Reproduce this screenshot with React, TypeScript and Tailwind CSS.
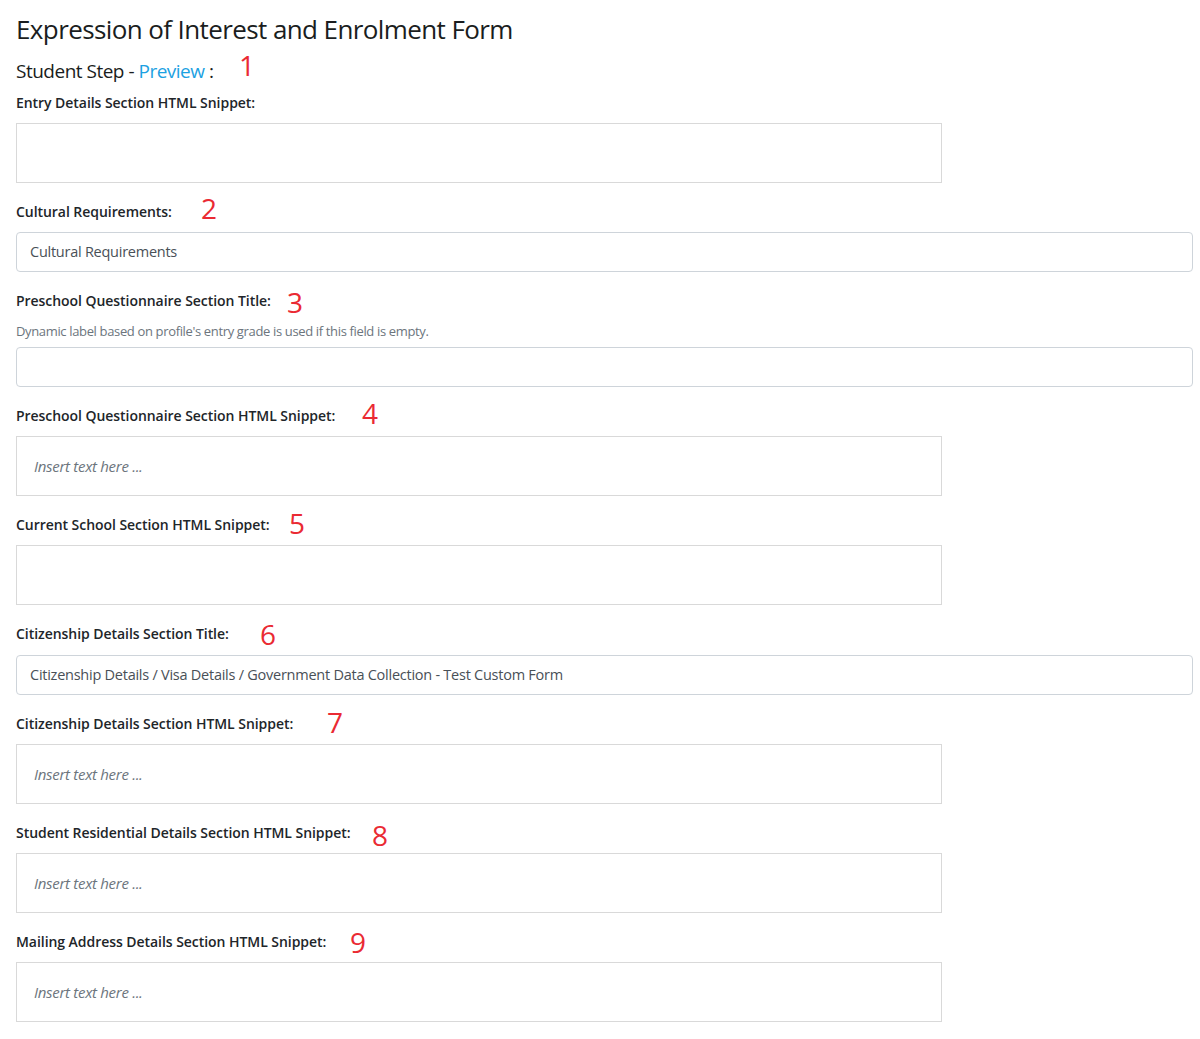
const font = { fontFamily: '"Open Sans", "Noto Sans", sans-serif' };

type Mark = { n: string; pos: string };

type Field = {
  label: string;
  mark?: Mark;
  kind: "html" | "input";
  value?: string;
  placeholder?: string;
  help?: string;
  labelGap?: string;
};

const fields: Field[] = [
  { label: "Entry Details Section HTML Snippet:", kind: "html" },
  {
    label: "Cultural Requirements:",
    mark: { n: "2", pos: "left-[185px] top-[-10px]" },
    kind: "input",
    value: "Cultural Requirements",
  },
  {
    label: "Preschool Questionnaire Section Title:",
    mark: { n: "3", pos: "left-[271px] top-[-5px]" },
    kind: "input",
    help: "Dynamic label based on profile's entry grade is used if this field is empty.",
  },
  {
    label: "Preschool Questionnaire Section HTML Snippet:",
    mark: { n: "4", pos: "left-[346px] top-[-9px]" },
    kind: "html",
    placeholder: "Insert text here ...",
  },
  {
    label: "Current School Section HTML Snippet:",
    mark: { n: "5", pos: "left-[273px] top-[-8px]" },
    kind: "html",
  },
  {
    label: "Citizenship Details Section Title:",
    mark: { n: "6", pos: "left-[244px] top-[-6px]" },
    kind: "input",
    value: "Citizenship Details / Visa Details / Government Data Collection - Test Custom Form",
    labelGap: "mb-[11px]",
  },
  {
    label: "Citizenship Details Section HTML Snippet:",
    mark: { n: "7", pos: "left-[311px] top-[-8px]" },
    kind: "html",
    placeholder: "Insert text here ...",
  },
  {
    label: "Student Residential Details Section HTML Snippet:",
    mark: { n: "8", pos: "left-[356px] top-[-4px]" },
    kind: "html",
    placeholder: "Insert text here ...",
  },
  {
    label: "Mailing Address Details Section HTML Snippet:",
    mark: { n: "9", pos: "left-[334px] top-[-6px]" },
    kind: "html",
    placeholder: "Insert text here ...",
  },
];

// red step numbers drawn over the form
function StepMark({ n, pos }: Mark) {
  return (
    <span className={`absolute ${pos} text-[28px] leading-[32px] text-[#ea2a33]`}>{n}</span>
  );
}

function FormField({ f }: { f: Field }) {
  return (
    <div className="mb-[19px]">
      <div className={`relative h-5 ${f.labelGap ?? "mb-[10px]"}`}>
        <label className="block text-[14px] leading-5 font-semibold text-[#212529] tracking-[-0.05px]">
          {f.label}
        </label>
        {f.mark && <StepMark {...f.mark} />}
      </div>
      {f.help && (
        <p className="mb-[6px] text-[13px] leading-5 text-[#6c757d] tracking-[-0.35px]">
          {f.help}
        </p>
      )}
      {f.kind === "html" ? (
        <div className="w-[926px] h-[60px] border border-[#d9d9d9] flex items-center pl-[17px]">
          {f.placeholder && (
            <span className="italic text-[15px] text-[#6c757d] tracking-[-0.3px]">
              {f.placeholder}
            </span>
          )}
        </div>
      ) : (
        <div className="w-[1177px] h-10 border border-[#ced4da] rounded-[4px] flex items-center pl-[13px]">
          {f.value && (
            <span className="text-[14.5px] text-[#495057] tracking-[-0.25px]">{f.value}</span>
          )}
        </div>
      )}
    </div>
  );
}

export default function App() {
  return (
    <div className="min-h-screen bg-white px-4 pt-[10px]" style={font}>
      <h1 className="text-[26px] leading-[38px] font-medium text-[#1a1d20] tracking-[-0.6px]">
        Expression of Interest and Enrolment Form
      </h1>
      <div className="relative mt-[10px] h-[26px] mb-[9px]">
        <h2 className="text-[19px] leading-[26px] font-medium text-[#1a1d20] tracking-[-0.5px]">
          Student Step - <span className="text-[#1ba1e2]">Preview</span> :
        </h2>
        <StepMark n="1" pos="left-[223px] top-[-9px]" />
      </div>
      {fields.map((f) => (
        <FormField key={f.label} f={f} />
      ))}
    </div>
  );
}
